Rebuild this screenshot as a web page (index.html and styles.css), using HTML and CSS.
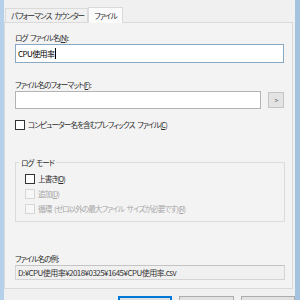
FILE: index.html
```html
<!DOCTYPE html>
<html lang="ja">
<head>
    <meta charset="UTF-8">
    <title>ログ ファイルのプロパティ</title>
    <link rel="stylesheet" href="styles.css">
</head>
<body>
    <div class="dialog">
        <div class="tabs">
            <div class="tab">パフォーマンス カウンター</div>
            <div class="tab active">ファイル</div>
        </div>

        <div class="panel">
            <div class="label">ログ ファイル名(<u>N</u>):</div>
            <div class="field focused">CPU使用率<span class="caret"></span></div>

            <div class="label second">ファイル名のフォーマット(<u>F</u>):</div>
            <div class="field-row">
                <div class="field"></div>
                <div class="small-btn">&gt;</div>
            </div>

            <div class="check prefix"><span class="box"></span>コンピューター名を含むプレフィックス ファイル(<u>C</u>)</div>

            <div class="group">
                <div class="legend">ログ モード</div>
                <div class="check"><span class="box"></span>上書き(<u>O</u>)</div>
                <div class="check disabled"><span class="box"></span>追加(<u>D</u>)</div>
                <div class="check disabled"><span class="box"></span>循環 (ゼロ以外の最大ファイル サイズが必要です)(<u>R</u>)</div>
            </div>

            <div class="label example-label">ファイル名の例:</div>
            <div class="example">D:¥CPU使用率¥2018¥0325¥1645¥CPU使用率.csv</div>
        </div>

        <div class="buttons">
            <div class="btn default">OK</div>
            <div class="btn">キャンセル</div>
            <div class="btn">適用(A)</div>
        </div>
    </div>
</body>
</html>
```

FILE: styles.css
```css
* {
    margin: 0;
    padding: 0;
    box-sizing: border-box;
}

body {
    width: 300px;
    height: 300px;
    overflow: hidden;
    background-color: #f0f0f0;
    font-family: "Noto Sans CJK JP", "Noto Sans", sans-serif;
    font-feature-settings: "palt";
    font-size: 7.6px;
    letter-spacing: -0.95px;
    word-spacing: 2px;
    line-height: 11px;
    color: #2b2b2b;
}

/* Window frame */
.dialog {
    width: 300px;
    height: 300px;
    overflow: hidden;
    border-left: 4px solid #b4d0ea;
    border-right: 5px solid #a3c3e0;
    background-color: #f0f0f0;
}

/* Tabs */
.tabs {
    display: flex;
    align-items: flex-end;
    height: 22px;
    padding-left: 1px;
}

.tab {
    height: 14px;
    padding: 1px 3px 0 5px;
    border: 1px solid #dadada;
    border-bottom: none;
    background-color: #f0f0f0;
}

.tab.active {
    height: 16px;
    padding: 2px 5px 0 5px;
    background-color: #fbfbfb;
    margin-bottom: -1px;
    position: relative;
    z-index: 1;
}

/* Tab page */
.panel {
    width: 289px;
    height: 267px;
    border: 1px solid #dadada;
    background-color: #f3f3f3;
    padding: 9px 8px 0 10px;
}

.label {
    height: 11px;
}

.label.second {
    margin-top: 16px;
}

.field {
    height: 19px;
    margin-top: 1px;
    border: 1px solid #b4b4b4;
    background-color: #fff;
    padding: 3px 2px;
    color: #000;
    font-size: 8px;
    letter-spacing: -0.6px;
}

.field.focused {
    border-color: #87a9c4;
}

.caret {
    display: inline-block;
    width: 1px;
    height: 11px;
    margin-left: 1px;
    background-color: #000;
    vertical-align: top;
}

.field-row {
    display: flex;
    align-items: center;
    gap: 7px;
}

.field-row .field {
    flex: 1;
    height: 18px;
}

.small-btn {
    width: 16px;
    height: 16px;
    margin-top: 1px;
    border: 1px solid #c4c4c4;
    background-color: #e3e3e3;
    font-size: 7px;
    line-height: 14px;
    text-align: center;
    color: #666;
}

/* Checkboxes */
.check {
    display: flex;
    align-items: center;
    height: 15px;
}

.box {
    width: 10px;
    height: 10px;
    border: 1px solid #333;
    background-color: #fff;
    margin-right: 3px;
}

.check.prefix {
    margin-top: 8px;
}

.check.disabled {
    color: #a6a6a6;
}

.check.disabled .box {
    border-color: #d6d6d6;
    background-color: #f7f7f7;
}

/* Group box */
.group {
    position: relative;
    height: 60px;
    margin-top: 30px;
    margin-right: -1px;
    border: 1px solid #dcdcdc;
    padding: 8px 0 0 9px;
}

.legend {
    position: absolute;
    top: -6px;
    left: 3px;
    padding: 0 2px;
    background-color: #f3f3f3;
}

.label.example-label {
    margin-top: 31px;
}

.example {
    height: 15px;
    margin-top: 1px;
    margin-right: -1px;
    border: 1px solid #d4d4d4;
    border-top-color: #c4c4c4;
    background-color: #f0f0f0;
    padding: 1px 2px;
    color: #333;
    font-size: 8px;
    letter-spacing: -0.55px;
    white-space: nowrap;
}

/* Dialog buttons */
.buttons {
    display: flex;
    padding: 7px 0 0 114px;
    gap: 7px;
}

.btn {
    width: 55px;
    height: 20px;
    border: 1px solid #adadad;
    background-color: #e1e1e1;
    text-align: center;
    line-height: 18px;
    padding-top: 1px;
}

.btn.default {
    border: 1px solid #0078d7;
    box-shadow: inset 0 0 0 1px #0078d7;
}
```
